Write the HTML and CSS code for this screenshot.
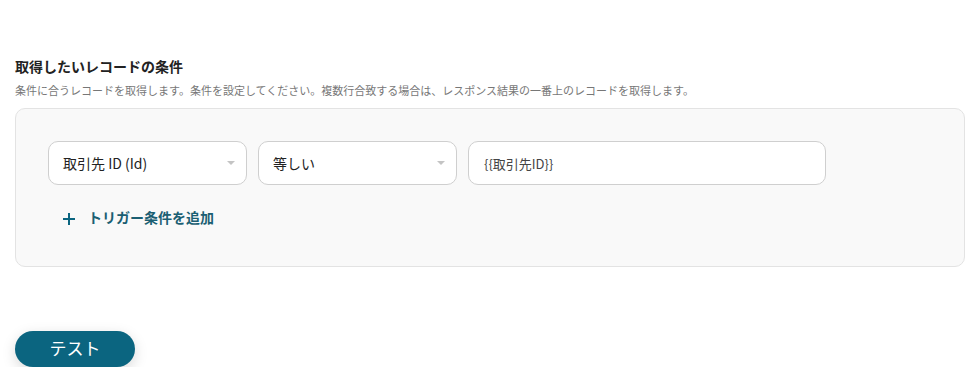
FILE: index.html
```html
<!DOCTYPE html>
<html lang="ja">
<head>
  <meta charset="UTF-8" />
  <title>取得したいレコードの条件</title>
  <link rel="stylesheet" href="styles.css">
</head>
<body>
  <div class="section">
    <h3 class="title">取得したいレコードの条件</h3>
    <p class="desc">条件に合うレコードを取得します。条件を設定してください。複数行合致する場合は、レスポンス結果の一番上のレコードを取得します。</p>

    <div class="panel">
      <div class="row">
        <div class="select field-a">
          <span>取引先 ID (Id)</span>
          <span class="arrow"></span>
        </div>
        <div class="select field-b">
          <span>等しい</span>
          <span class="arrow"></span>
        </div>
        <div class="input">{{取引先ID}}</div>
      </div>
      <button class="add">
        <svg width="14" height="14" viewBox="0 0 14 14"><path d="M7 1v12M1 7h12" stroke="#0b6580" stroke-width="2" fill="none"/></svg>
        <span>トリガー条件を追加</span>
      </button>
    </div>
  </div>

  <button class="test">テスト</button>
</body>
</html>
```

FILE: styles.css
```css
body {
  margin: 0;
  padding: 0 15px;
  font-family: "Noto Sans CJK JP", "Noto Sans", sans-serif;
  color: #333;
  background: #fff;
}

.section {
  padding-top: 56px;
}

.title {
  font-size: 14px;
  font-weight: bold;
  color: #222;
  margin: 0 0 6px;
  line-height: 20px;
}

.desc {
  font-size: 11px;
  color: #777;
  margin: 0 0 9px;
  line-height: 17px;
}

.panel {
  width: 950px;
  box-sizing: border-box;
  height: 159px;
  background: #f9f9f9;
  border: 1px solid #e3e3e3;
  border-radius: 10px;
  padding: 32px 32px 0;
}

.row {
  display: flex;
  gap: 11px;
}

.select,
.input {
  height: 44px;
  box-sizing: border-box;
  background: #fff;
  border: 1px solid #cfcfcf;
  border-radius: 10px;
  display: flex;
  align-items: center;
  font-size: 14px;
  color: #222;
}

.select {
  width: 199px;
  padding: 0 10px 0 14px;
  justify-content: space-between;
}

.arrow {
  width: 0;
  height: 0;
  border-left: 4px solid transparent;
  border-right: 4px solid transparent;
  border-top: 4px solid #c4c4c4;
  margin-right: 1px;
}

.input {
  width: 358px;
  padding: 0 15px;
  color: #444;
  font-size: 13px;
}

.add {
  display: flex;
  align-items: center;
  gap: 12px;
  margin: 22px 0 0 14px;
  padding: 0;
  background: none;
  border: none;
  font-family: inherit;
  font-size: 14px;
  font-weight: bold;
  color: #1b5f73;
  cursor: pointer;
}

.add svg {
  margin-top: 4px;
}

.test {
  margin-top: 64px;
  width: 120px;
  height: 36px;
  padding: 0 0 4px;
  border: none;
  border-radius: 18px;
  background: #0b6580;
  color: #fff;
  font-family: inherit;
  font-size: 17px;
  box-shadow: 0 4px 14px rgba(0, 0, 0, 0.15);
  cursor: pointer;
}
```
